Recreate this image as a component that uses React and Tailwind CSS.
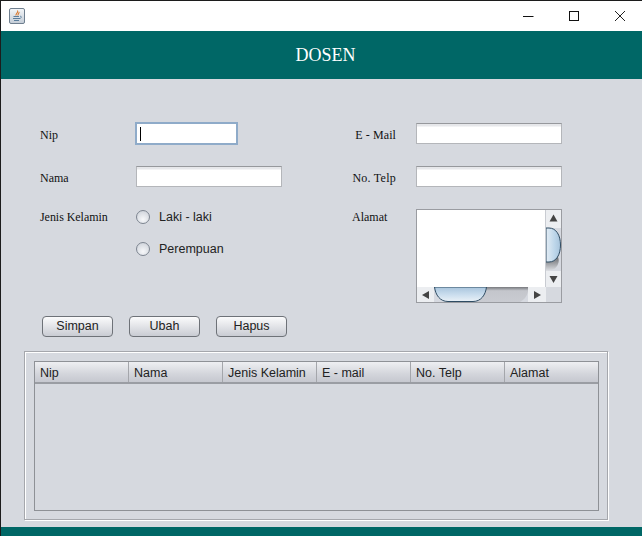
const columns = ["Nip", "Nama", "Jenis Kelamin", "E - mail", "No. Telp", "Alamat"];
const buttons = ["Simpan", "Ubah", "Hapus"];
const radios = ["Laki - laki", "Perempuan"];

function JavaIcon() {
  return (
    <svg width="16" height="16" viewBox="0 0 16 16" className="block">
      <defs>
        <linearGradient id="javaBg" x1="0" y1="0" x2="0" y2="1">
          <stop offset="0" stopColor="#f4f6f8" />
          <stop offset="1" stopColor="#c3ccd6" />
        </linearGradient>
      </defs>
      <rect x="0.5" y="0.5" width="15" height="15" rx="1.5" fill="url(#javaBg)" stroke="#6f7f8f" />
      <path d="M8.5 2.5C10 4.5 6.5 5.5 7 7.5M10 4C10.5 5.5 8.5 6 9 7.5" fill="none" stroke="#d9772b" strokeWidth="1.1" />
      <path d="M4.5 8.5H10M4 10.5H11M5 12.5H10" fill="none" stroke="#5b7d9c" strokeWidth="1" />
      <path d="M11 8.2C13 8 13 10.2 10.5 10.5" fill="none" stroke="#5b7d9c" strokeWidth="0.8" />
    </svg>
  );
}

function WindowControls() {
  return (
    <div className="flex items-center -mt-px">
      <div className="w-[46px] h-[30px] flex items-center justify-center">
        <svg width="12" height="12" viewBox="0 0 12 12"><path d="M1 6.5H11.5" stroke="#111" strokeWidth="1" /></svg>
      </div>
      <div className="w-[46px] h-[30px] flex items-center justify-center">
        <svg width="12" height="12" viewBox="0 0 12 12"><rect x="1.5" y="1.5" width="9" height="9" fill="none" stroke="#111" /></svg>
      </div>
      <div className="w-[45px] h-[30px] flex items-center justify-center">
        <svg width="12" height="12" viewBox="0 0 12 12"><path d="M1 1L11 11M11 1L1 11" stroke="#222" strokeWidth="1" /></svg>
      </div>
    </div>
  );
}

function TextField({ className, focused }) {
  if (focused) {
    return (
      <div className={`h-[23px] w-[103px] border-2 border-[#8fabc9] bg-white flex items-center pl-[3px] ${className || ""}`}>
        <div className="w-px h-[14px] bg-black" />
      </div>
    );
  }
  return (
    <div className={`h-[21px] border border-[#b4b6ba] border-t-[#96989c] bg-[linear-gradient(#e6e7ea_0,#e6e7ea_2px,#ffffff_3px)] ${className || ""}`} />
  );
}

function Radio({ label }) {
  return (
    <div className="flex items-center h-[16px] gap-[9px]">
      <div className="w-[14px] h-[14px] rounded-full border border-[#7d8590] bg-[radial-gradient(circle_at_50%_70%,#f7f8fa,#c9ced6)]" />
      <span className="font-['Liberation_Sans',sans-serif] text-[12.5px] text-[#222]">{label}</span>
    </div>
  );
}

function VerticalScroll() {
  return (
    <svg width="15" height="78" viewBox="0 0 15 78" className="block">
      <defs>
        <linearGradient id="vThumb" x1="0" y1="0" x2="1" y2="0">
          <stop offset="0" stopColor="#e4edf5" />
          <stop offset="0.6" stopColor="#bdd6ea" />
          <stop offset="1" stopColor="#a8c4dc" />
        </linearGradient>
        <linearGradient id="vShadow" x1="0" y1="0" x2="0" y2="1">
          <stop offset="0" stopColor="#45484c" />
          <stop offset="1" stopColor="#dfe1e5" />
        </linearGradient>
      </defs>
      <rect width="15" height="78" fill="#d6d9e0" />
      <rect x="0" y="0" width="15" height="18" fill="#eceef1" />
      <path d="M3.5 9.5L7.5 2.5L11.5 9.5Z" transform="translate(0 2)" fill="#444" />
      <path d="M0 43H6C12 43 14 50 12 54C11 57 8 61 0 61Z" fill="url(#vShadow)" />
      <path d="M0 18H3C10 18 14.5 25 14.5 35C14.5 45 10 52 3 52H0Z" fill="url(#vThumb)" stroke="#2f4c63" strokeWidth="1" />
      <rect x="0" y="61" width="15" height="17" fill="#eceef1" />
      <path d="M3.5 66L7.5 73L11.5 66Z" fill="#444" />
    </svg>
  );
}

function HorizontalScroll() {
  return (
    <svg width="129" height="15" viewBox="0 0 129 15" className="block">
      <defs>
        <linearGradient id="hThumb" x1="0" y1="0" x2="0" y2="1">
          <stop offset="0" stopColor="#a8c4dc" />
          <stop offset="0.5" stopColor="#c8dced" />
          <stop offset="1" stopColor="#eaf1f7" />
        </linearGradient>
        <linearGradient id="hShadow" x1="0" y1="0" x2="0" y2="1">
          <stop offset="0" stopColor="#77797d" />
          <stop offset="0.25" stopColor="#c4c6cc" />
          <stop offset="1" stopColor="#c9cbd1" />
        </linearGradient>
      </defs>
      <rect width="129" height="15" fill="#d6d9e0" />
      <rect x="0" y="0" width="17" height="15" fill="#eceef1" />
      <path d="M5 8L12 4V12Z" fill="#444" />
      <path d="M60 0H111C112 7 108 12 103 15H60Z" fill="url(#hShadow)" />
      <rect x="111" y="0" width="18" height="15" fill="#eceef1" />
      <path d="M117 4L124 8L117 12Z" fill="#444" />
      <path d="M17.5 0C18.5 8 23 14.5 31 14.5H56C64 14.5 68.5 8 69.5 0Z" fill="url(#hThumb)" stroke="#2f4c63" strokeWidth="1" />
    </svg>
  );
}

function AddressBox() {
  return (
    <div className="w-[146px] h-[94px] border border-[#9a9ca1] flex flex-col overflow-hidden">
      <div className="flex">
        <div className="w-[129px] h-[77px] bg-white" />
        <div className="h-[77px] overflow-hidden border-l border-[#c9ccd2]">
          <VerticalScroll />
        </div>
      </div>
      <div className="flex">
        <HorizontalScroll />
      </div>
    </div>
  );
}

export default function App() {
  return (
    <div className="w-[642px] h-[536px] flex flex-col overflow-hidden bg-[#d6d9df] border-t border-l border-[#1c1c1c] font-['Liberation_Serif',serif]">
      <div className="h-[30px] bg-white flex items-center justify-between pl-[8px] pr-0 shrink-0">
        <JavaIcon />
        <WindowControls />
      </div>

      <div className="h-[48px] bg-[#006766] flex items-center justify-center pl-[8px] shrink-0">
        <span className="text-white text-[18px] leading-none">DOSEN</span>
      </div>

      <div className="flex-1 flex flex-col pl-[23px]">
        <div className="grid grid-cols-[318px_auto] pt-[43px] text-[12px] text-[#111]">
          <div className="flex flex-col">
            <div className="h-[23px] flex items-center pl-[16px]">
              <span className="w-[95px] pt-[2px]">Nip</span>
              <TextField focused />
            </div>
            <div className="h-[21px] mt-[21px] flex items-center pl-[16px]">
              <span className="w-[96px] pt-[2px]">Nama</span>
              <TextField className="w-[146px]" />
            </div>
            <div className="mt-[22px] flex pl-[16px]">
              <span className="w-[96px] leading-[16px] tracking-[-0.05px]">Jenis Kelamin</span>
              <div className="flex flex-col gap-[16px]">
                {radios.map((r) => (
                  <Radio key={r} label={r} />
                ))}
              </div>
            </div>
          </div>

          <div className="flex flex-col">
            <div className="h-[23px] flex items-center">
              <span className="w-[54px] text-right pt-[2px] tracking-[0.1px]">E - Mail</span>
              <TextField className="w-[146px] ml-[20px]" />
            </div>
            <div className="h-[21px] mt-[21px] flex items-center">
              <span className="w-[54px] text-right pt-[2px] tracking-[0.25px]">No. Telp</span>
              <TextField className="w-[146px] ml-[20px]" />
            </div>
            <div className="mt-[22px] flex">
              <span className="w-[54px] leading-[16px] pl-[10px]">Alamat</span>
              <div className="ml-[20px]">
                <AddressBox />
              </div>
            </div>
          </div>
        </div>

        <div className="flex gap-[16px] pl-[18px] mt-[13px]">
          {buttons.map((b) => (
            <button
              key={b}
              className="w-[71px] h-[21px] rounded-[4px] border border-[#6e7278] bg-[linear-gradient(#fbfbfc,#c9ccd3)] font-['Liberation_Sans',sans-serif] text-[12.5px] leading-none text-[#222]"
            >
              {b}
            </button>
          ))}
        </div>

        <div className="w-[584px] h-[169px] mt-[14px] border border-[#a5a7ac] p-[9px] shadow-[inset_1px_1px_0_#ffffff,1px_1px_0_#ffffff]">
          <div className="w-[565px] h-[150px] border border-[#8e9196]">
            <div className="flex h-[22px] border-b-2 border-[#9a9da3] bg-[linear-gradient(#eeeff2,#d3d5db_60%,#c6c8cf)]">
              {columns.map((c, i) => (
                <div
                  key={c}
                  className={`w-[94px] shrink-0 pl-[5px] pt-[2px] flex items-center font-['Liberation_Sans',sans-serif] text-[12.5px] text-[#222] ${i < 5 ? "border-r border-[#a4a6ab]" : ""}`}
                >
                  {c}
                </div>
              ))}
            </div>
          </div>
        </div>
      </div>

      <div className="h-[9px] bg-[#006766] shrink-0" />
    </div>
  );
}
